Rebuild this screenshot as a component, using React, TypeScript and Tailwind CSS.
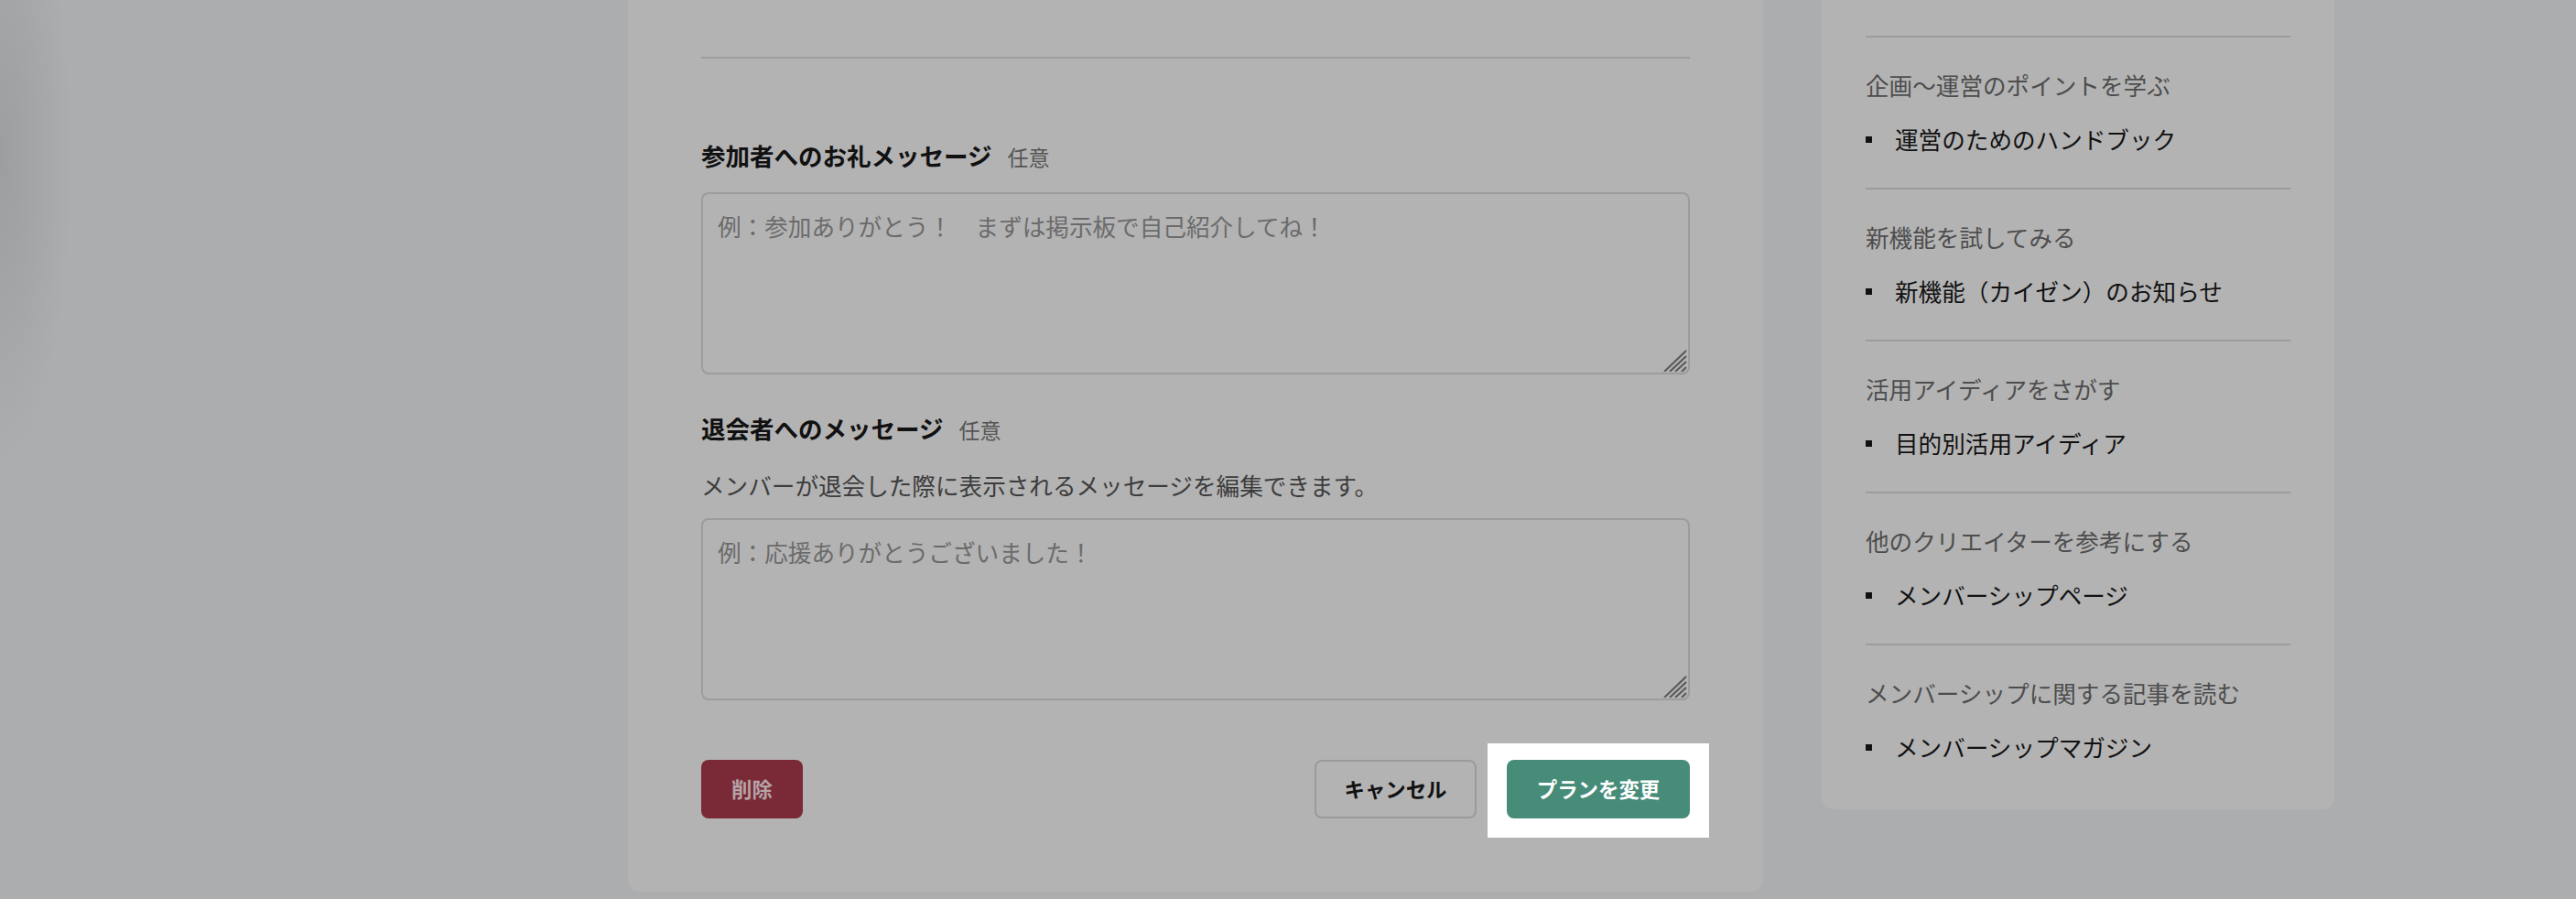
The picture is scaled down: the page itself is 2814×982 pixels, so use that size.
import type { ReactNode } from 'react'

const sideSections = [
  { title: '企画〜運営のポイントを学ぶ', item: '運営のためのハンドブック' },
  { title: '新機能を試してみる', item: '新機能（カイゼン）のお知らせ' },
  { title: '活用アイディアをさがす', item: '目的別活用アイディア' },
  { title: '他のクリエイターを参考にする', item: 'メンバーシップページ' },
  { title: 'メンバーシップに関する記事を読む', item: 'メンバーシップマガジン' },
]

function ResizeGrip() {
  return (
    <svg
      className="absolute right-[3px] bottom-[3px] pointer-events-none"
      width="26"
      height="24"
      viewBox="0 0 26 24"
      fill="none"
      stroke="#575757"
      strokeWidth="2"
    >
      <line x1="1" y1="24" x2="25" y2="1" />
      <line x1="7" y1="24" x2="25" y2="7" />
      <line x1="13" y1="24" x2="25" y2="13" />
      <line x1="20" y1="24" x2="25" y2="19" />
    </svg>
  )
}

function FieldLabel({ children }: { children: ReactNode }) {
  return (
    <div className="flex items-baseline gap-[17px] leading-[40px]">
      <span className="text-[26.5px] font-bold text-[#111]">{children}</span>
      <span className="text-[23px] text-[#555]">任意</span>
    </div>
  )
}

function MessageBox({ placeholder }: { placeholder: string }) {
  return (
    <div className="relative h-[199px]">
      <textarea
        placeholder={placeholder}
        className="block w-full h-full resize-none rounded-[8px] border-2 border-[#9c9c9c] bg-transparent
                   px-[16px] pt-[15px] text-[25.6px] leading-[40px] text-[#111] outline-none
                   placeholder:text-[#6b6b6b]"
      />
      <ResizeGrip />
    </div>
  )
}

export default function App() {
  return (
    <div className="relative h-[982px] w-full overflow-hidden bg-[#acadaf] font-['Noto_Sans_CJK_JP','Noto_Sans',sans-serif]">
      {/* soft shadow on the far left */}
      <div className="absolute left-0 top-0 h-[700px] w-[200px] bg-[radial-gradient(ellipse_80px_340px_at_0_170px,rgba(0,0,0,0.09),transparent)]" />

      <div className="relative ml-[686px] flex items-start gap-[64px]">
        {/* Main form panel */}
        <div className="w-[1240px] rounded-b-[13px] bg-[#b3b3b3] px-[80px] pt-[62px] pb-[80px]">
          <div className="h-[2px] bg-[#9c9c9c]" />

          <div className="mt-[86px]">
            <FieldLabel>参加者へのお礼メッセージ</FieldLabel>
          </div>
          <div className="mt-[19px]">
            <MessageBox placeholder="例：参加ありがとう！　まずは掲示板で自己紹介してね！" />
          </div>

          <div className="mt-[39px]">
            <FieldLabel>退会者へのメッセージ</FieldLabel>
          </div>
          <p className="mt-[21px] text-[25.6px] leading-[40px] text-[#3c3c3c]">
            メンバーが退会した際に表示されるメッセージを編集できます。
          </p>
          <div className="mt-[16px]">
            <MessageBox placeholder="例：応援ありがとうございました！" />
          </div>

          {/* Actions */}
          <div className="mt-[65px] flex items-center justify-between">
            <button className="h-[64px] rounded-[8px] bg-[#7a2a36] px-[33px] text-[22.4px] font-bold text-[#b5a4a7]">
              削除
            </button>
            <div className="flex items-center gap-[33px]">
              <button className="h-[64px] w-[177px] rounded-[8px] border-2 border-[#9a9a9a] text-[22.4px] font-bold text-[#111]">
                キャンセル
              </button>
              <div className="relative">
                <div className="absolute -top-[18px] -bottom-[21px] -left-[21px] -right-[21px] bg-white" />
                <button className="relative h-[64px] w-[200px] rounded-[8px] bg-[#468c78] text-[22.4px] font-bold text-white">
                  プランを変更
                </button>
              </div>
            </div>
          </div>
        </div>

        {/* Side guide panel */}
        <div className="w-[560px] rounded-b-[13px] bg-[#b3b3b3] px-[48px] pt-[39px] pb-[15px]">
          {sideSections.map((s) => (
            <div key={s.title} className="border-t-2 border-[#9c9c9c] pt-[34px] pb-[35px]">
              <p className="text-[25.6px] leading-[36px] text-[#4d4d4d]">{s.title}</p>
              <div className="mt-[23px] flex items-center leading-[36px]">
                <span className="h-[7px] w-[7px] bg-[#111]" />
                <span className="ml-[25px] text-[25.6px] text-[#111]">{s.item}</span>
              </div>
            </div>
          ))}
        </div>
      </div>
    </div>
  )
}
